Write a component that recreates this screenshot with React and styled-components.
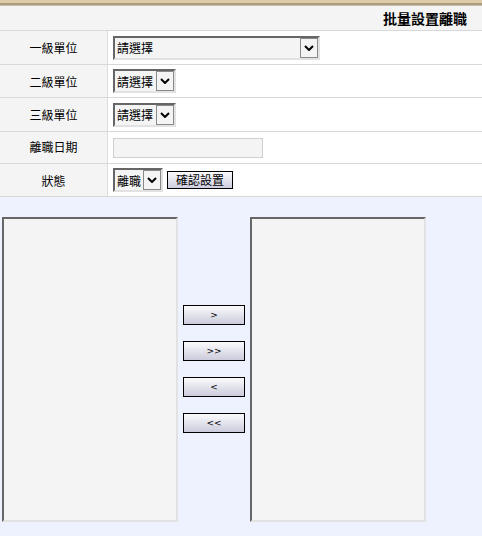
import { Fragment } from "react";
import styled, { createGlobalStyle } from "styled-components";

const Global = createGlobalStyle`
  html, body {
    margin: 0;
    padding: 0;
    background: #eef2ff;
  }
  body {
    font-family: "Noto Sans CJK TC", "Liberation Sans", sans-serif;
    font-size: 12px;
    color: #000;
  }
`

const Page = styled.div`
  width: 482px;
  height: 536px;
  overflow: hidden;
  display: flex;
  flex-direction: column;
`

const TopBar = styled.div`
  height: 3px;
  background: #dfcba6;
  border-bottom: 2px solid #ad9d7f;
  box-shadow: 0 1px 0 #c4bcae;
  margin-bottom: 1px;
`

const Title = styled.div`
  height: 24px;
  background: #f4f4f4;
  border-bottom: 1px solid #d8d8d8;
  display: flex;
  align-items: center;
  justify-content: flex-end;
  padding-right: 15px;
  font-size: 14px;
  font-weight: bold;
`

const Form = styled.div`
  display: grid;
  grid-template-columns: 108px 1fr;
  background: #fff;
`

const Label = styled.div`
  height: ${p => p.h}px;
  background: #f4f4f4;
  border-right: 1px solid #dcdcdc;
  border-bottom: 1px solid #d8d8d8;
  display: flex;
  align-items: center;
  justify-content: center;
  padding-bottom: ${p => p.lift || 0}px;
  box-sizing: border-box;
`

const Cell = styled.div`
  height: ${p => p.h}px;
  border-bottom: 1px solid #d8d8d8;
  display: flex;
  align-items: center;
  gap: 4px;
  padding-left: 5px;
  box-sizing: border-box;
`

const SelectBox = styled.div`
  width: ${p => p.w}px;
  height: 24px;
  box-sizing: border-box;
  border-top: 2px solid #666;
  border-left: 2px solid #666;
  border-right: 2px solid #e2e2e2;
  border-bottom: 2px solid #e2e2e2;
  background: #f4f4f4;
  display: flex;
  align-items: center;
  justify-content: space-between;
  padding-left: 2px;
`

const ArrowBox = styled.div`
  width: 18px;
  height: 20px;
  box-sizing: border-box;
  border: 1px solid #8a8a8a;
  background: #f4f4f4;
  display: flex;
  align-items: center;
  justify-content: center;
`

const DateInput = styled.div`
  width: 150px;
  height: 20px;
  box-sizing: border-box;
  border: 1px solid #cfcfcf;
  background: #f4f4f4;
`

const ConfirmButton = styled.button`
  width: 66px;
  height: 18px;
  padding: 0;
  border: 1px solid #000;
  background: linear-gradient(#fbfbfd, #cdcde0);
  font-family: inherit;
  font-size: 12px;
  line-height: 14px;
`

const Lower = styled.div`
  flex: 1;
  background: #eef2ff;
  display: flex;
  align-items: center;
  padding: 20px 0 14px 2px;
  gap: 5px;
`

const ListBox = styled.div`
  width: 176px;
  height: 305px;
  box-sizing: border-box;
  border-top: 2px solid #666;
  border-left: 2px solid #666;
  border-right: 2px solid #e2e2e2;
  border-bottom: 2px solid #e2e2e2;
  background: #f4f4f4;
`

const Movers = styled.div`
  display: flex;
  flex-direction: column;
  gap: 16px;
  margin-top: -2px;
`

const MoveButton = styled.button`
  width: 62px;
  height: 20px;
  padding: 0;
  border: 1px solid #000;
  background: linear-gradient(#fbfbfd 0%, #e8e8f0 40%, #cbcbdc 100%);
  font-family: "DejaVu Sans", sans-serif;
  font-size: 9px;
  color: #000;
`

const Chevron = () => (
  <svg width="10" height="6" viewBox="0 0 10 6">
    <polyline points="1,1 5,5 9,1" fill="none" stroke="#000" strokeWidth="2" />
  </svg>
)

const Select = ({ w, text }) => (
  <SelectBox w={w}>
    <span>{text}</span>
    <ArrowBox>
      <Chevron />
    </ArrowBox>
  </SelectBox>
)

const App = () => {
  const rows = [
    { label: "一級單位", h: 34, body: <Select w={207} text="請選擇" /> },
    { label: "二級單位", h: 33, body: <Select w={63} text="請選擇" /> },
    { label: "三級單位", h: 34, body: <Select w={63} text="請選擇" /> },
    { label: "離職日期", h: 32, lift: 3, body: <DateInput /> },
    {
      label: "狀態",
      h: 33,
      body: (
        <>
          <Select w={50} text="離職" />
          <ConfirmButton>確認設置</ConfirmButton>
        </>
      ),
    },
  ]

  return (
    <Page>
      <Global />
      <TopBar />
      <Title>批量設置離職</Title>
      <Form>
        {rows.map(r => (
          <Fragment key={r.label}>
            <Label h={r.h} lift={r.lift}>{r.label}</Label>
            <Cell h={r.h}>{r.body}</Cell>
          </Fragment>
        ))}
      </Form>
      <Lower>
        <ListBox />
        <Movers>
          <MoveButton>&gt;</MoveButton>
          <MoveButton>&gt;&gt;</MoveButton>
          <MoveButton>&lt;</MoveButton>
          <MoveButton>&lt;&lt;</MoveButton>
        </Movers>
        <ListBox />
      </Lower>
    </Page>
  )
}

export default App;
